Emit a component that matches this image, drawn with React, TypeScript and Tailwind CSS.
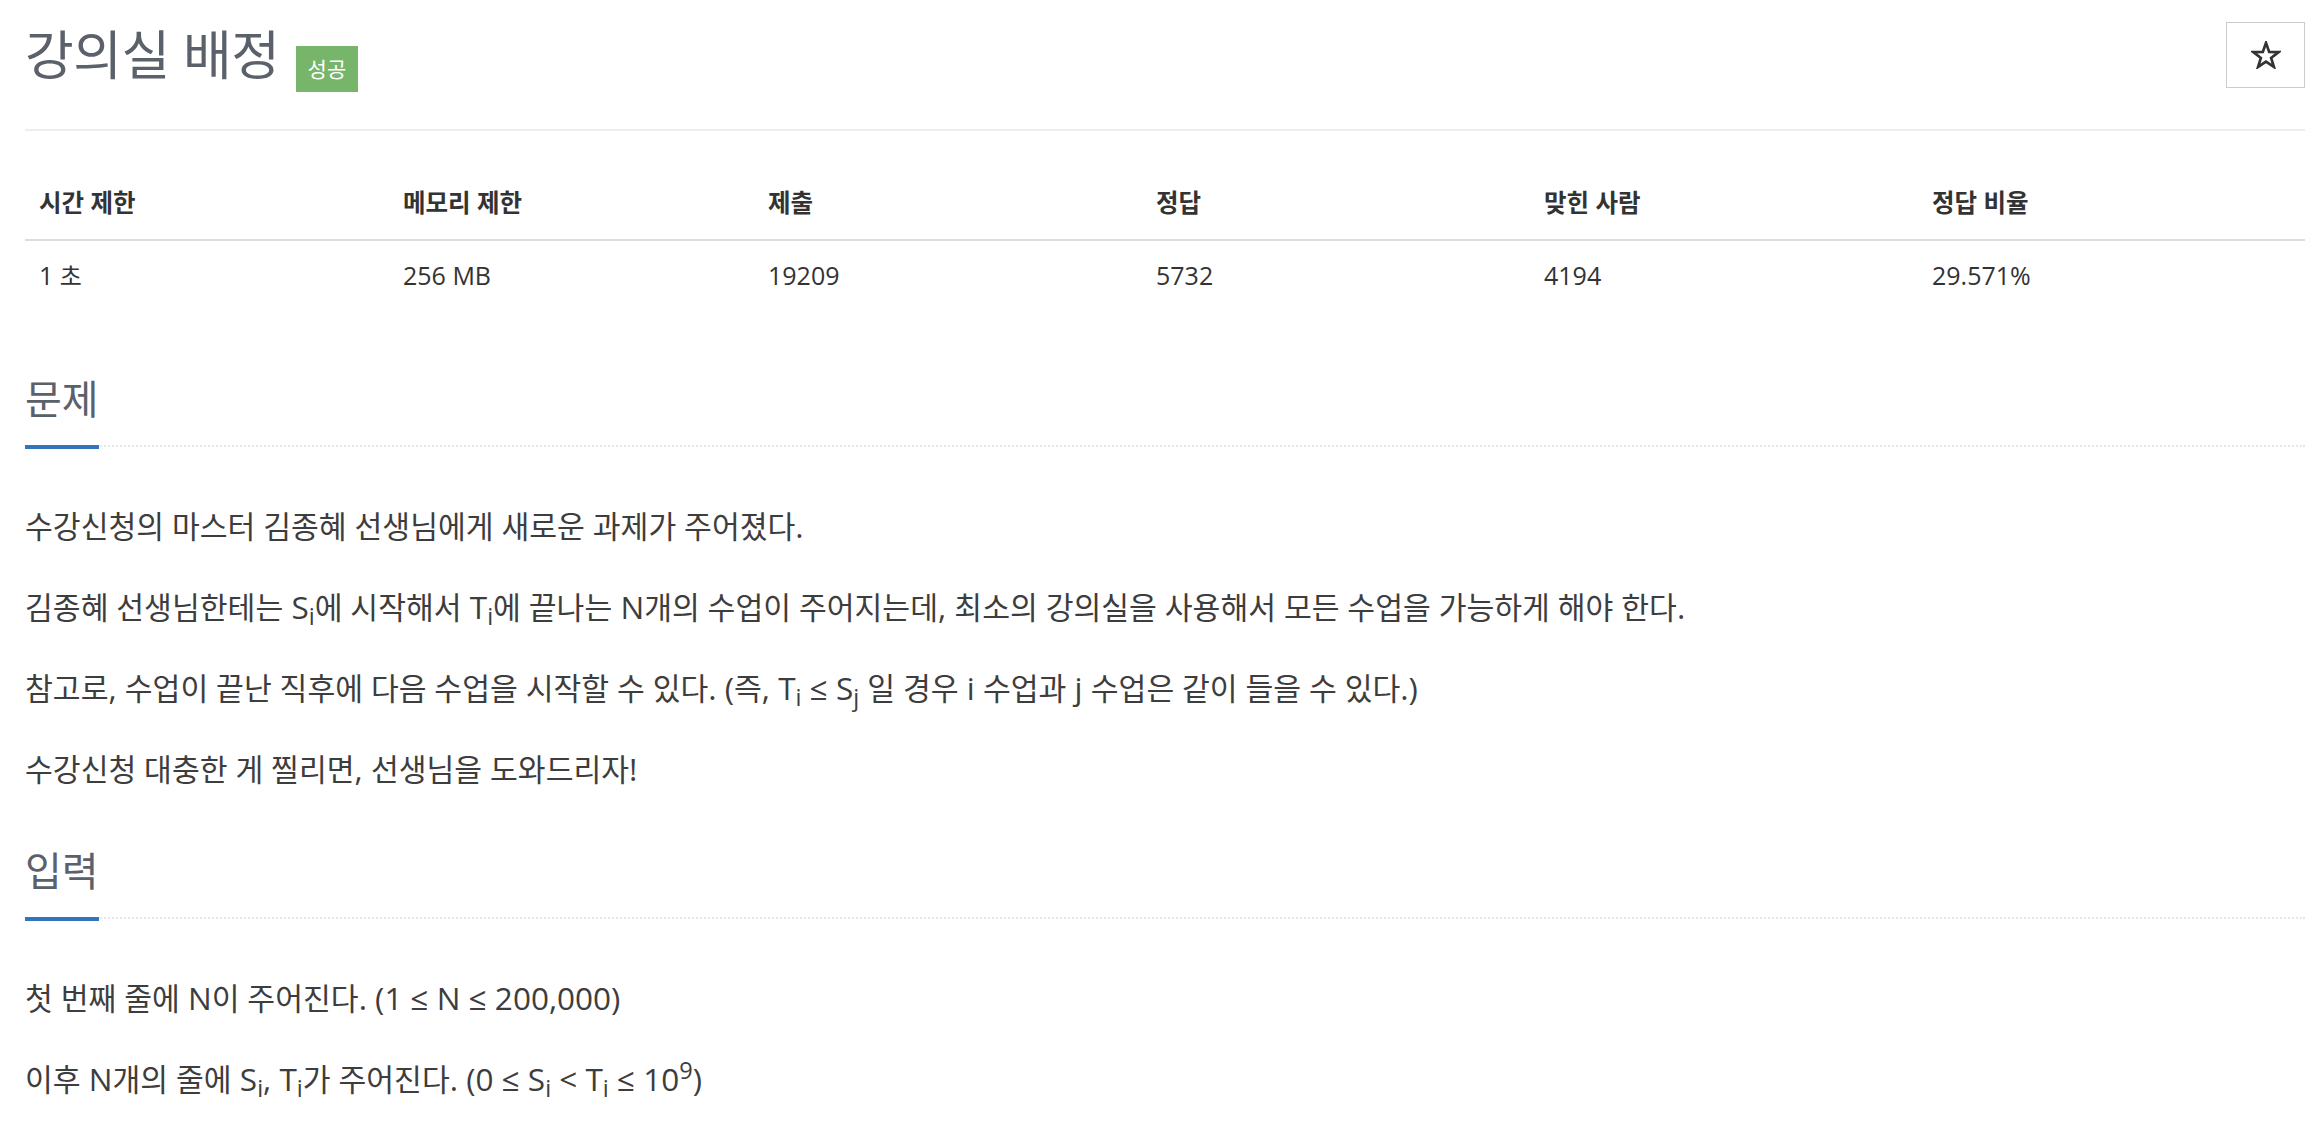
const SANS = "font-['Open_Sans','Noto_Sans_CJK_KR',sans-serif]";

// Hangul runs get their own size so Korean and Latin widths both line up with the original
function ko(text: string, size = 'text-[0.96em]') {
  return text.split(/([가-힣][가-힣 ]*[가-힣]|[가-힣])/).map((part, i) =>
    /[가-힣]/.test(part) ? (
      <span key={i} className={size}>
        {part}
      </span>
    ) : (
      part
    ),
  );
}

const STATS = [
  { label: '시간 제한', value: '1 초' },
  { label: '메모리 제한', value: '256 MB' },
  { label: '제출', value: '19209' },
  { label: '정답', value: '5732' },
  { label: '맞힌 사람', value: '4194' },
  { label: '정답 비율', value: '29.571%' },
];

const COLS = ['w-[364px]', 'w-[365px]', 'w-[388px]', 'w-[388px]', 'w-[388px]', 'flex-1'];

function Headline({ children }: { children: React.ReactNode }) {
  return (
    <h2 className="border-b-2 border-dotted border-[#e4e6ea]">
      <span className="inline-block -mb-[4px] border-b-4 border-[#3274be] pb-[19px] text-[40px] leading-[54px] font-normal text-[#5b616b]">
        {children}
      </span>
    </h2>
  );
}

function StarIcon() {
  return (
    <svg width="30" height="28" viewBox="0 0 24 23" fill="none" stroke="#333" strokeWidth="2.2" strokeLinejoin="miter">
      <path d="M12 1.5 L14.6 8.9 L22.4 9.1 L16.2 13.9 L18.5 21.3 L12 16.9 L5.5 21.3 L7.8 13.9 L1.6 9.1 L9.4 8.9 Z" />
    </svg>
  );
}

export default function App() {
  return (
    <div className={`${SANS} bg-white min-h-screen pl-[25px] pr-[15px] pt-[22px] text-[#333]`}>
      {/* title row */}
      <div className="flex items-start justify-between">
        <div className="flex items-start">
          <h1 className="text-[53px] leading-[66px] font-normal text-[#5b616b] tracking-[-0.5px]">강의실 배정</h1>
          <span className="ml-[16px] mt-[24px] h-[46px] px-[12px] flex items-center bg-[#76b56a] text-white text-[21px] leading-none">
            성공
          </span>
        </div>
        <button
          type="button"
          className="w-[79px] h-[66px] border-[1.5px] border-[#cccccc] bg-white flex items-center justify-center"
          aria-label="즐겨찾기"
        >
          <StarIcon />
        </button>
      </div>

      <div className="mt-[37px] border-t-2 border-[#eeeeee]" />

      {/* stats table */}
      <div className="mt-[36px] mb-[61px]">
        <div className="flex border-b-2 border-[#dddddd] h-[74px] items-center font-bold text-[#333] text-[24.5px]">
          {STATS.map((s, i) => (
            <div key={s.label} className={`${COLS[i]} shrink-0 pl-[14px]`}>
              {s.label}
            </div>
          ))}
        </div>
        <div className="flex h-[70px] items-center text-[#333] text-[25px]">
          {STATS.map((s, i) => (
            <div key={s.label} className={`${COLS[i]} shrink-0 pl-[14px]`}>
              {ko(s.value)}
            </div>
          ))}
        </div>
      </div>

      {/* 문제 */}
      <section className="mb-[52px]">
        <Headline>문제</Headline>
        <div className="mt-[56px] text-[31.5px] leading-[45px] text-[#3d3d3d]">
          <p className="mb-[35px]">{ko('수강신청의 마스터 김종혜 선생님에게 새로운 과제가 주어졌다.')}</p>
          <p className="mb-[35px]">
            {ko('김종혜 선생님한테는 S')}
            <sub>i</sub>
            {ko('에 시작해서 T')}
            <sub>i</sub>
            {ko('에 끝나는 N개의 수업이 주어지는데, 최소의 강의실을 사용해서 모든 수업을 가능하게 해야 한다.')}
          </p>
          <p className="mb-[35px]">
            {ko('참고로, 수업이 끝난 직후에 다음 수업을 시작할 수 있다. (즉, T')}
            <sub>i</sub> ≤ S<sub>j</sub>
            {ko(' 일 경우 i 수업과 j 수업은 같이 들을 수 있다.)')}
          </p>
          <p className="mb-[35px]">{ko('수강신청 대충한 게 찔리면, 선생님을 도와드리자!')}</p>
        </div>
      </section>

      {/* 입력 */}
      <section>
        <Headline>입력</Headline>
        <div className="mt-[56px] text-[31.5px] leading-[45px] text-[#3d3d3d]">
          <p className="mb-[35px]">{ko('첫 번째 줄에 N이 주어진다. (1 ≤ N ≤ 200,000)')}</p>
          <p className="mb-[35px]">
            {ko('이후 N개의 줄에 S')}
            <sub>i</sub>, T<sub>i</sub>
            {ko('가 주어진다. (0 ≤ S')}
            <sub>i</sub> &lt; T<sub>i</sub> ≤ 10<sup>9</sup>)
          </p>
        </div>
      </section>
    </div>
  );
}
